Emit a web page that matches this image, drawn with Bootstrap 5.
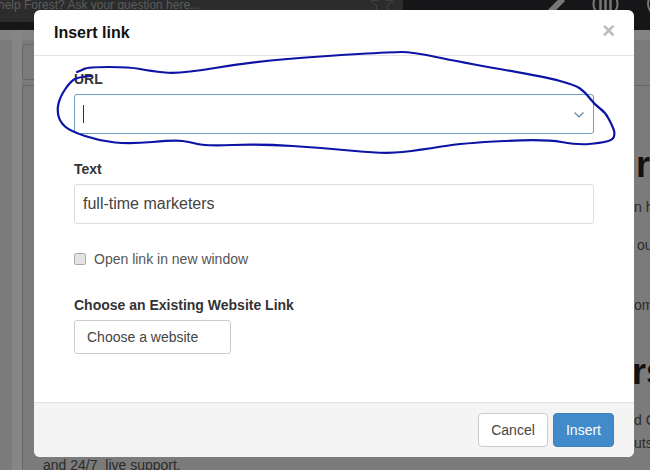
<!DOCTYPE html>
<html lang="en">
<head>
    <meta charset="UTF-8">
    <title>Insert link</title>
    <link href="https://cdn.jsdelivr.net/npm/bootstrap@5.3.0/dist/css/bootstrap.min.css" rel="stylesheet">
    <style>
        body {
            width: 650px;
            height: 470px;
            overflow: hidden;
            background: #7b7b7b;
            font-family: "Liberation Sans", Arial, sans-serif;
            color: #333;
        }
        .page-behind { height: 470px; position: relative; }
        .top-bar { height: 30px; background: #161618; }
        .search-box { width: 403px; height: 22px; background: #2c2c2c; color: #5c5c5c; font-size: 12px; line-height: 10px; white-space: nowrap; overflow: hidden; text-indent: -2px; }
        .top-icons { position: absolute; left: 0; top: 0; }
        .light-band { height: 10px; background: #838383; }
        .side-rail { position: absolute; left: 12px; top: 30px; bottom: 0; width: 10px; background: #868686; }
        .behind-tab { position: absolute; left: 22px; top: 44px; width: 100px; height: 36px; border: 1px solid #666; border-radius: 4px; }
        .behind-panel { position: absolute; left: 22px; top: 85px; right: 0; bottom: 0; border-left: 1px solid #666; border-top: 1px solid #666; }
        .peek-text { position: absolute; color: #2b2b2b; font-size: 14px; line-height: 20px; white-space: nowrap; }
        .peek-head { position: absolute; color: #111; font-size: 36px; font-weight: 700; line-height: 40px; white-space: nowrap; }
        .link-modal {
            position: absolute;
            left: 34px;
            top: 10px;
            width: 600px;
            height: 447px;
            background: #fff;
            border-radius: 6px;
            overflow: hidden;
        }
        .link-head { height: 46px; flex: none; padding: 0 20px; border-bottom: 1px solid #e5e5e5; }
        .link-head h4 { font-size: 16px; font-weight: 700; color: #111; margin: 0; }
        .close-x { color: #bbb; font-size: 22px; font-weight: 700; line-height: 1; margin-right: -1px; margin-top: -3px; }
        .link-body { height: 346px; flex: none; padding: 13px 40px 0; }
        .link-label { font-size: 14px; font-weight: 700; line-height: 20px; margin-bottom: 5px; color: #333; display: block; }
        .url-field, .text-field {
            width: 520px;
            height: 40px;
            border: 1px solid #ddd;
            border-radius: 3px;
            padding: 0 8px;
            font-size: 16px;
            line-height: 38px;
            color: #444;
            background: #fff;
        }
        .url-field { border-color: #6f9dbb; margin-bottom: 25px; }
        .caret-line { width: 1px; height: 18px; background: #333; }
        .url-chevron { margin-right: 1px; margin-top: 2px; }
        .check-row { margin-top: 25px; font-size: 14px; line-height: 20px; color: #555; gap: 8px; }
        .check-box { width: 12px; height: 12px; border: 1px solid #aaa; border-radius: 2px; background: #e4e4e4; }
        .pick-btn { width: 157px; height: 34px; border: 1px solid #ccc; border-radius: 3px; background: #fff; color: #444; font-size: 14px; line-height: 32px; padding: 0 12px; }
        .exist-label { margin-top: 26px; margin-bottom: 5px; }
        .link-foot { height: 55px; flex: none; background: #f4f4f4; border-top: 1px solid #e2e2e2; padding: 0 20px; gap: 5px; }
        .foot-btn { height: 34px; border-radius: 4px; font-size: 14px; line-height: 32px; text-align: center; }
        .foot-cancel { width: 70px; background: #fff; border: 1px solid #ccc; color: #444; }
        .foot-insert { width: 61px; background: #428bca; border: 1px solid #3d80ba; color: #fff; }
        .pen-mark { position: absolute; left: 0; top: 0; pointer-events: none; }
    </style>
</head>
<body>

<div class="page-behind">
    <div class="top-bar d-flex">
        <div class="search-box">help Forest? Ask your question here...</div>
    </div>
    <div class="light-band"></div>
    <div class="side-rail"></div>
    <div class="behind-tab"></div>
    <div class="behind-panel"></div>

    <svg class="top-icons" width="650" height="30" viewBox="0 0 650 30">
        <path d="M382-7 385 0 393 1 387 6 389 14 382 10 375 14 377 6 371 1 379 0Z" fill="none" stroke="#444" stroke-width="1"/>
        <path d="M563-1 547 15" fill="none" stroke="#777" stroke-width="6"/>
        <circle cx="605.500" cy="4" r="12" fill="none" stroke="#777" stroke-width="2"/>
        <path d="M600.500-2V10M605.500-2V10M610.500-2V10" fill="none" stroke="#777" stroke-width="2.500"/>
        <circle cx="660" cy="4" r="12" fill="none" stroke="#777" stroke-width="2"/>
    </svg>

    <div class="peek-head" style="left:636px;top:145px">r</div>
    <div class="peek-head" style="left:632px;top:352px">rs</div>
    <div class="peek-text" style="left:634px;top:197px">n h</div>
    <div class="peek-text" style="left:637px;top:235px">ou</div>
    <div class="peek-text" style="left:634px;top:295px">om</div>
    <div class="peek-text" style="left:634px;top:410px">d C</div>
    <div class="peek-text" style="left:634px;top:433px">uts</div>
    <div class="peek-text" style="left:43px;top:455px">and 24/7&nbsp; live support.</div>

    <div class="link-modal d-flex flex-column">
        <div class="link-head d-flex align-items-center justify-content-between">
            <h4>Insert link</h4>
            <span class="close-x">×</span>
        </div>
        <div class="link-body">
            <label class="link-label">URL</label>
            <div class="url-field d-flex align-items-center justify-content-between">
                <span class="caret-line"></span>
                <svg class="url-chevron" width="10" height="6" viewBox="0 0 10 6"><path d="M.5.5 5 5 9.500.5" fill="none" stroke="#5f8aa6" stroke-width="1.200"/></svg>
            </div>
            <label class="link-label">Text</label>
            <div class="text-field">full-time marketers</div>
            <div class="check-row d-flex align-items-center">
                <span class="check-box"></span>
                <span>Open link in new window</span>
            </div>
            <label class="link-label exist-label">Choose an Existing Website Link</label>
            <div class="pick-btn">Choose a website</div>
        </div>
        <div class="link-foot d-flex align-items-center justify-content-end">
            <div class="foot-btn foot-cancel">Cancel</div>
            <div class="foot-btn foot-insert">Insert</div>
        </div>
    </div>

    <svg class="pen-mark" width="650" height="470" viewBox="0 0 650 470">
        <path d="M91 76Q78 77 74 79.500Q70 82 65 89.500Q60 97 58.500 103.500Q57 110 58.500 116Q60 122 65 126.500Q70 131 85 136Q100 141 115 142.500Q130 144 152.500 142Q175 140 182.500 141Q190 142 197.500 144Q205 146 232.500 145Q260 144 292.500 146Q325 148 355 151Q385 154 402.500 152Q420 150 441.500 146.500Q463 143 504 141Q545 139 561.500 142Q578 145 589 144Q600 143 606.500 141.500Q613 140 614 136.500Q615 133 613.500 129Q612 125 608.500 118.500Q605 112 600 108.500Q595 105 590 98.500Q585 92 580 88.500Q575 85 560 81Q545 77 502.500 69.500Q460 62 436 57Q412 52 402 52Q392 52 358.500 54Q325 56 287.500 59Q250 62 215 68Q180 74 165 72.500Q150 71 140 69Q130 67 109 67Q88 67 84 69Q80 71 77 72" fill="none" stroke="#0c14a5" stroke-width="2.200" stroke-linecap="round"/>
    </svg>
</div>

</body>
</html>
